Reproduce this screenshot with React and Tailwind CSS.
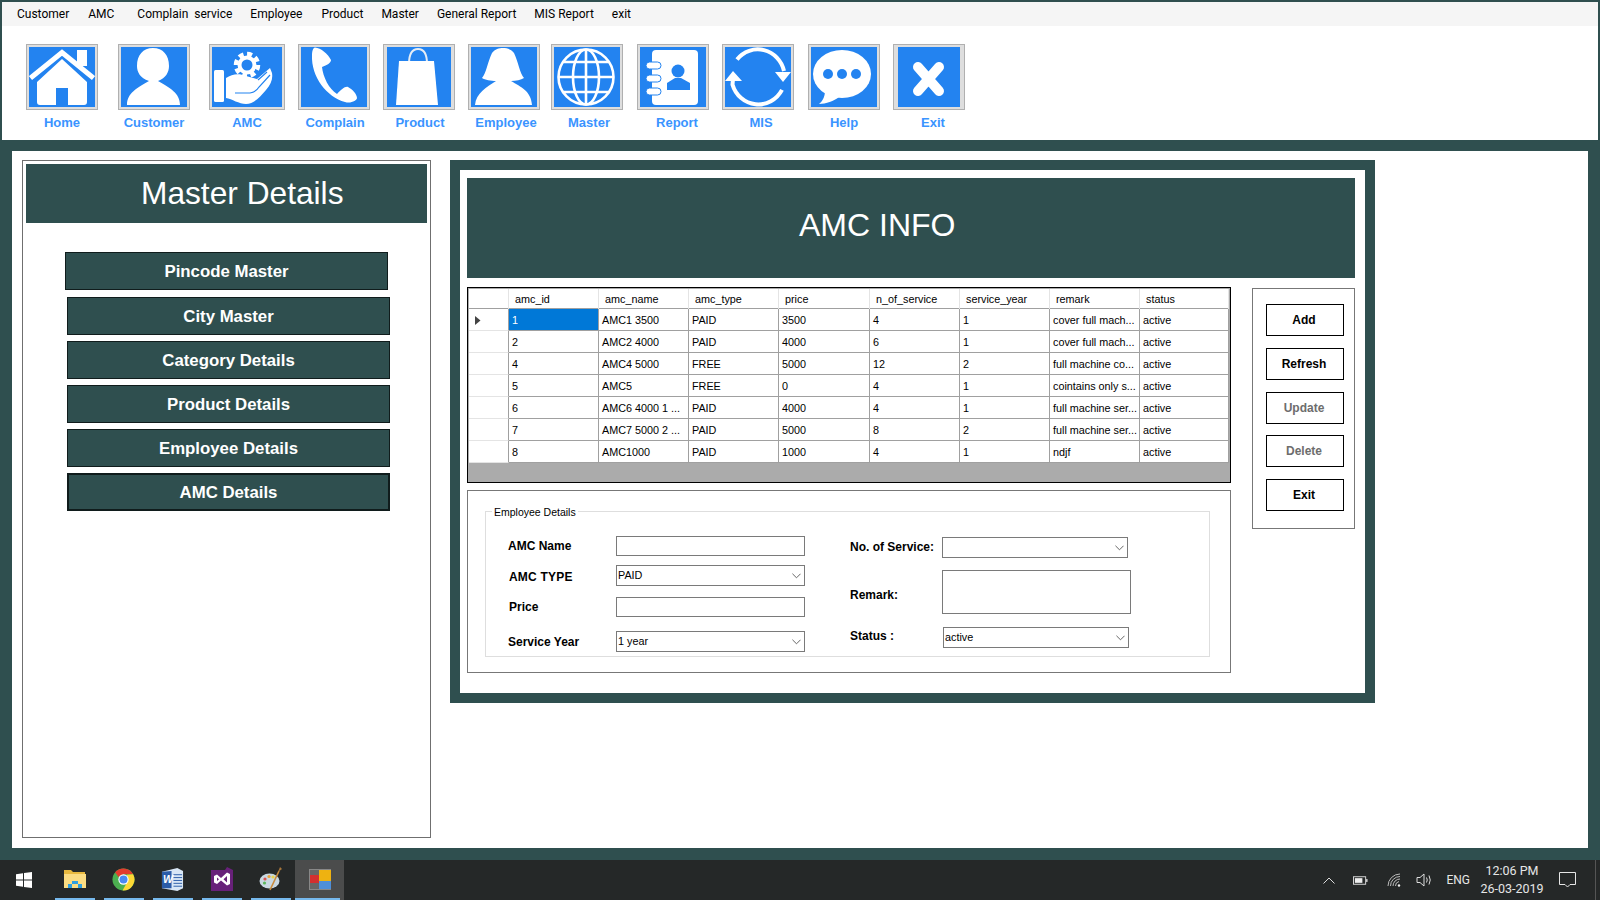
import React from 'react';

const menuItems = [
  { label: 'Customer', cls: '' },
  { label: 'AMC', cls: '' },
  { label: 'Complain  service', cls: 'ml-[4px]' },
  { label: 'Employee', cls: '-ml-[1px]' },
  { label: 'Product', cls: '' },
  { label: 'Master', cls: '-ml-[1px]' },
  { label: 'General Report', cls: '-ml-[1px]' },
  { label: 'MIS Report', cls: '-ml-[1px]' },
  { label: 'exit', cls: '-ml-[1px]' },
];

const HomeIcon = () => (
  <svg viewBox="0 0 66 60" className="block w-full h-full">
    <rect x="48" y="3" width="10" height="16" fill="#fff" />
    <path d="M1.5 31 L33 5.5 L64.5 31" fill="none" stroke="#fff" strokeWidth="5" />
    <path d="M8 35 L33 12 L58 35 V55 Q58 58 55 58 H39 V41 H27 V58 H11 Q8 58 8 55 Z" fill="#fff" />
  </svg>
);

const CustomerIcon = () => (
  <svg viewBox="0 0 66 60" className="block w-full h-full">
    <path d="M6 58 C6 46 16 41 28 34 C19 31 16 25 16 19 C16 8 22 1 32 1 C42 1 48 8 48 19 C48 25 45 31 37 34 C49 41 59 46 59 58 Z" fill="#fff" />
  </svg>
);

const AmcIcon = () => (
  <svg viewBox="0 0 70 60" className="block w-full h-full">
    <circle cx="35" cy="18" r="11" fill="none" stroke="#fff" strokeWidth="4.5" strokeDasharray="5 3.6" />
    <circle cx="35" cy="18" r="7.5" fill="none" stroke="#fff" strokeWidth="4" />
    <rect x="2" y="23" width="10" height="32" rx="1.5" fill="#fff" />
    <path d="M14 31 C20 27 27 26 34 29 L45 32 L58 21 L60 26 C61 32 59 37 54 43 C48 50 42 57 34 57 C27 57 20 52 14 51 Z" fill="#fff" />
    <path d="M23 46 L38 46 Q44 45 47 40 L58 28 M46 33 L55 25" fill="none" stroke="#2383f0" strokeWidth="1.2" />
  </svg>
);

const PhoneIcon = () => (
  <svg viewBox="0 0 66 60" className="block w-full h-full">
    <path d="M14 0.5 C20 1 27 7 30 13 C30 16 26 18 21 20 C22 30 28 42 36 47 C40 43 44 39 47 40 C51 42 56 47 56 51 C56 53 50 57 44 55 C26 50 10 30 11 8 C11 4 12 1 14 0.5 Z" fill="#fff" />
  </svg>
);

const BagIcon = () => (
  <svg viewBox="0 0 64 60" className="block w-full h-full">
    <path d="M22 17 C22 6 26 2 31 2 C36 2 40 6 40 17" fill="none" stroke="#e6edf5" strokeWidth="2" />
    <path d="M12 14 H47 L51 58 H9 Z" fill="#fff" />
  </svg>
);

const EmployeeIcon = () => (
  <svg viewBox="0 0 66 60" className="block w-full h-full">
    <path d="M11 31 C15 27 17 14 21 6 C24 2 28 1 32 1 C36 1 40 2 43 6 C47 14 49 27 53 31 C50 33 45 34 40 34 C50 40 60 44 61 58 H4 C5 46 16 40 25 34 C20 34 14 33 11 31 Z" fill="#fff" />
  </svg>
);

const GlobeIcon = () => (
  <svg viewBox="0 0 66 60" className="block w-full h-full" fill="none" stroke="#fff" strokeWidth="2.6">
    <circle cx="32" cy="30" r="27.5" />
    <ellipse cx="32" cy="30" rx="13" ry="27.5" />
    <path d="M32 2 V58 M4 30 H60 M9 15 H55 M9 45 H55" />
  </svg>
);

const ReportIcon = () => (
  <svg viewBox="0 0 66 60" className="block w-full h-full">
    <rect x="12" y="3" width="46" height="55" rx="4" fill="#fff" />
    <rect x="6" y="15" width="15" height="7" rx="3.5" fill="#fff" stroke="#2383f0" strokeWidth="1" />
    <rect x="6" y="28" width="15" height="7" rx="3.5" fill="#fff" stroke="#2383f0" strokeWidth="1" />
    <rect x="6" y="41" width="15" height="7" rx="3.5" fill="#fff" stroke="#2383f0" strokeWidth="1" />
    <circle cx="38" cy="24" r="6.5" fill="#2383f0" />
    <path d="M27 43 V36 L35 31 H41 L50 36 V43 Z" fill="#2383f0" />
  </svg>
);

const SyncIcon = () => (
  <svg viewBox="0 0 66 60" className="block w-full h-full">
    <path d="M12 12.4 A27 28 0 0 1 59 24 M57 42.9 A27 28 0 0 1 7.5 37.6 L8 32" fill="none" stroke="#fff" strokeWidth="4" />
    <path d="M50 25 H66 L58 35 Z M0 34 H17 L8 24 Z" fill="#fff" />
  </svg>
);

const HelpIcon = () => (
  <svg viewBox="0 0 66 60" className="block w-full h-full">
    <ellipse cx="31" cy="27" rx="29" ry="24" fill="#fff" />
    <path d="M14 44 C14 50 11 55 8 57 C15 57 23 54 28 50 Z" fill="#fff" />
    <circle cx="17" cy="27" r="5" fill="#2383f0" />
    <circle cx="31" cy="27" r="5" fill="#2383f0" />
    <circle cx="45" cy="27" r="5" fill="#2383f0" />
  </svg>
);

const ExitIcon = () => (
  <svg viewBox="0 0 62 60" className="block w-full h-full">
    <path d="M20 20 L41 44 M41 20 L20 44" fill="none" stroke="#fff" strokeWidth="10" strokeLinecap="round" />
  </svg>
);

const toolItems = [
  { label: 'Home', icon: HomeIcon, item: 'ml-[24px]', box: 'w-[72px] px-[2px]', text: '' },
  { label: 'Customer', icon: CustomerIcon, item: 'ml-[20px]', box: 'w-[72px] px-[2px]', text: '' },
  { label: 'AMC', icon: AmcIcon, item: 'ml-[19px]', box: 'w-[76px] px-[2px]', text: '' },
  { label: 'Complain', icon: PhoneIcon, item: 'ml-[13px]', box: 'w-[72px] px-[2px]', text: 'translate-x-[1px]' },
  { label: 'Product', icon: BagIcon, item: 'ml-[13px]', box: 'w-[72px] px-[3px]', text: 'translate-x-[1px]' },
  { label: 'Employee', icon: EmployeeIcon, item: 'ml-[13px]', box: 'w-[72px] px-[2px]', text: 'translate-x-[2px]' },
  { label: 'Master', icon: GlobeIcon, item: 'ml-[11px]', box: 'w-[72px] px-[2px]', text: 'translate-x-[2px]' },
  { label: 'Report', icon: ReportIcon, item: 'ml-[14px]', box: 'w-[72px] px-[2px]', text: 'translate-x-[4px]' },
  { label: 'MIS', icon: SyncIcon, item: 'ml-[13px]', box: 'w-[72px] px-[2px]', text: 'translate-x-[3px]' },
  { label: 'Help', icon: HelpIcon, item: 'ml-[14px]', box: 'w-[72px] px-[2px]', text: '' },
  { label: 'Exit', icon: ExitIcon, item: 'ml-[13px]', box: 'w-[72px] px-[4px]', text: 'translate-x-[4px]' },
];

const masterButtons = [
  { label: 'Pincode Master', cls: 'mt-[29px] ml-[39px] border' },
  { label: 'City Master', cls: 'mt-[7px] ml-[41px] border' },
  { label: 'Category Details', cls: 'mt-[6px] ml-[41px] border' },
  { label: 'Product Details', cls: 'mt-[6px] ml-[41px] border' },
  { label: 'Employee Details', cls: 'mt-[6px] ml-[41px] border' },
  { label: 'AMC Details', cls: 'mt-[6px] ml-[41px] border-2' },
];

const gridCols = ['amc_id', 'amc_name', 'amc_type', 'price', 'n_of_service', 'service_year', 'remark', 'status'];

const gridRows = [
  ['1', 'AMC1 3500', 'PAID', '3500', '4', '1', 'cover full mach...', 'active'],
  ['2', 'AMC2 4000', 'PAID', '4000', '6', '1', 'cover full mach...', 'active'],
  ['4', 'AMC4 5000', 'FREE', '5000', '12', '2', 'full machine co...', 'active'],
  ['5', 'AMC5', 'FREE', '0', '4', '1', 'cointains only s...', 'active'],
  ['6', 'AMC6 4000 1 ...', 'PAID', '4000', '4', '1', 'full machine ser...', 'active'],
  ['7', 'AMC7 5000 2 ...', 'PAID', '5000', '8', '2', 'full machine ser...', 'active'],
  ['8', 'AMC1000', 'PAID', '1000', '4', '1', 'ndjf', 'active'],
];

const sideButtons = [
  { label: 'Add', cls: 'mt-[15px] text-black' },
  { label: 'Refresh', cls: 'mt-[12px] text-black' },
  { label: 'Update', cls: 'mt-[12px] text-[#6d6d6d]' },
  { label: 'Delete', cls: 'mt-[11px] text-[#6d6d6d]' },
  { label: 'Exit', cls: 'mt-[12px] text-black' },
];

const Combo = ({ value, cls }) => (
  <div className={`flex items-start justify-between border border-[#7a7a7a] bg-white pl-[1px] pr-[3px] pt-[1px] text-[10.8px] text-black ${cls}`}>
    <span>{value}</span>
    <svg viewBox="0 0 10 6" className="mt-[6px] w-[9px] h-[6px]">
      <path d="M0.5 0.5 L5 5 L9.5 0.5" fill="none" stroke="#555" strokeWidth="1" />
    </svg>
  </div>
);

const TextBox = ({ cls }) => <div className={`border border-[#7a7a7a] bg-white ${cls}`}></div>;

const Label = ({ children, cls }) => <div className={`text-[12px] font-bold text-black whitespace-pre ${cls}`}>{children}</div>;

const TaskItem = ({ children, active }) => (
  <div className={`relative w-[49px] h-[40px] flex items-center justify-center ${active ? 'bg-[#4b4c4c]' : ''}`}>
    {children}
    <div className={`absolute bottom-0 h-[2px] bg-[#76b9ed] ${active ? 'left-0 w-[45px]' : 'left-[5px] w-[40px]'}`}></div>
  </div>
);

const App = () => {
  return (
    <div className="w-[1600px] h-[900px] overflow-hidden flex flex-col bg-[#2f4f4f] font-['Liberation_Sans',sans-serif]">
      <div className="mx-[2px] mt-[2px] bg-white">
        {/* Menu */}
        <div className="h-[24px] bg-[#f5f5f5] flex items-center gap-[19px] pl-[15px] text-[12px] text-black font-['Roboto',sans-serif]">
          {menuItems.map((m) => (
            <span key={m.label} className={`whitespace-pre ${m.cls}`}>{m.label}</span>
          ))}
        </div>

        {/* Toolbar */}
        <div className="h-[114px] flex items-start pt-[18px]">
          {toolItems.map((t) => {
            const Icon = t.icon;
            return (
              <div key={t.label} className={`flex flex-col items-center ${t.item}`}>
                <div className={`h-[66px] border border-[#b0b0b0] bg-[#dedede] py-[2px] ${t.box}`}>
                  <div className="w-full h-full bg-[#2383f0]">
                    <Icon />
                  </div>
                </div>
                <div className={`text-[13px] font-bold text-[#3a94ff] leading-[15px] mt-[5px] ${t.text}`}>{t.label}</div>
              </div>
            );
          })}
        </div>
      </div>

      {/* Main area */}
      <div className="mt-[11px] ml-[12px] w-[1576px] h-[697px] bg-white flex items-start">
        {/* Master Details */}
        <div className="mt-[9px] ml-[10px] w-[409px] h-[678px] border border-[#6f6f6f] p-[3px]">
          <div className="h-[59px] bg-[#2f4f4f] flex items-center pl-[115px] text-[31.7px] text-white">Master Details</div>
          {masterButtons.map((b) => (
            <div key={b.label} className={`w-[323px] h-[38px] bg-[#2f4f4f] border-[#101c1c] flex items-center justify-center pt-[1px] text-[16.8px] font-bold text-white ${b.cls}`}>
              {b.label}
            </div>
          ))}
        </div>

        {/* AMC Info */}
        <div className="mt-[9px] ml-[19px] w-[925px] h-[543px] bg-[#2f4f4f] p-[10px]">
          <div className="h-[523px] bg-white pt-[8px] pl-[7px]">
            <div className="w-[888px] h-[100px] bg-[#2f4f4f] flex items-center pl-[332px] pb-[6px] text-[32px] text-white">AMC INFO</div>

            <div className="mt-[9px] flex items-start">
              <div className="w-[764px]">
                {/* Data grid */}
                <div className="h-[196px] border border-black bg-[#ababab] p-[1px] text-[10.8px] text-black">
                  <div className="grid grid-cols-[40px_90px_90px_90px_91px_90px_90px_90px_89px] h-[20px] bg-white border-b border-[#a0a0a0]">
                    <div className="border-r border-[#e4e4e4]"></div>
                    {gridCols.map((c) => (
                      <div key={c} className="pl-[6px] leading-[21px] border-r border-[#e4e4e4]">{c}</div>
                    ))}
                  </div>
                  {gridRows.map((row, i) => (
                    <div key={row[0]} className="grid grid-cols-[40px_90px_90px_90px_91px_90px_90px_90px_89px] h-[22px] bg-white">
                      <div className="border-r border-b border-r-[#a0a0a0] border-b-[#e4e4e4] flex items-center pl-[6px] pt-[1px]">
                        {i === 0 && (
                          <svg viewBox="0 0 6 9" className="w-[6px] h-[9px]">
                            <path d="M0 0 L5.5 4.5 L0 9 Z" fill="#444" />
                          </svg>
                        )}
                      </div>
                      {row.map((cell, j) => (
                        <div
                          key={j}
                          className={`border-r border-b border-[#a0a0a0] pl-[3px] leading-[22px] whitespace-nowrap overflow-hidden ${i === 0 && j === 0 ? 'bg-[#0078d7] text-white' : ''}`}
                        >
                          {cell}
                        </div>
                      ))}
                    </div>
                  ))}
                </div>

                {/* Form */}
                <div className="mt-[7px] h-[183px] border border-[#777] pt-[20px] pl-[17px]">
                  <div className="relative w-[725px] h-[146px] border border-[#dedede] flex items-start">
                    <div className="absolute left-[6px] -top-[6px] bg-white px-[2px] text-[10.5px] leading-[13px] text-black">Employee Details</div>

                    <div className="ml-[22px] w-[297px]">
                      <div className="mt-[24px] flex items-center">
                        <Label cls="w-[108px]">AMC Name</Label>
                        <TextBox cls="w-[189px] h-[20px]" />
                      </div>
                      <div className="mt-[9px] flex items-center">
                        <Label cls="w-[108px] pl-[1px] pt-[2px] tracking-[0.2px]">AMC TYPE</Label>
                        <Combo value="PAID" cls="w-[189px] h-[21px]" />
                      </div>
                      <div className="mt-[11px] flex items-center">
                        <Label cls="w-[108px] pl-[1px]">Price</Label>
                        <TextBox cls="w-[189px] h-[20px]" />
                      </div>
                      <div className="mt-[14px] flex items-center">
                        <Label cls="w-[108px] pt-[1px]">Service Year</Label>
                        <Combo value="1 year" cls="w-[189px] h-[21px]" />
                      </div>
                    </div>

                    <div className="ml-[46px]">
                      <div className="mt-[25px] flex items-center">
                        <Label cls="w-[91px] -ml-[1px] mr-[1px] pb-[2px]">No. of Service:</Label>
                        <Combo value="" cls="w-[186px] h-[21px]" />
                      </div>
                      <div className="mt-[12px] flex items-center">
                        <Label cls="w-[91px] -ml-[1px] mr-[1px] pt-[6px]">Remark:</Label>
                        <TextBox cls="w-[189px] h-[44px]" />
                      </div>
                      <div className="mt-[13px] -ml-[1px] flex items-center">
                        <Label cls="w-[93px] pb-[3px]">Status :</Label>
                        <Combo value="active" cls="w-[186px] h-[21px]" />
                      </div>
                    </div>
                  </div>
                </div>
              </div>

              {/* Side buttons */}
              <div className="ml-[21px] mt-[1px] w-[103px] h-[241px] border border-[#777] pl-[13px]">
                {sideButtons.map((b) => (
                  <div key={b.label} className={`w-[78px] h-[32px] border border-black flex items-center justify-center pr-[2px] text-[12px] font-bold ${b.cls}`}>
                    {b.label}
                  </div>
                ))}
              </div>
            </div>
          </div>
        </div>
      </div>

      {/* Taskbar */}
      <div className="mt-[12px] h-[40px] bg-[#252828] flex items-center">
        <div className="w-[50px] flex justify-center pr-[2px]">
          <svg viewBox="0 0 16 16" className="w-[16px] h-[16px]">
            <path d="M0 2.3 L7 1.3 V7.6 H0 Z M8 1.1 L16 0 V7.6 H8 Z M0 8.5 H7 V14.7 L0 13.7 Z M8 8.5 H16 V16 L8 14.9 Z" fill="#fff" />
          </svg>
        </div>
        <TaskItem>
          <svg viewBox="0 0 22 20" className="w-[22px] h-[20px] mb-[2px]">
            <path d="M0 1 H7 L9 3 H21 V6 H0 Z" fill="#e8b93f" />
            <rect x="0" y="5" width="22" height="14" fill="#fbdc82" />
            <path d="M4 19 V15 H8 V12 H14 V15 H18 V19 Z" fill="#2f9fe0" />
            <rect x="8" y="15" width="6" height="4" fill="#fbdc82" />
          </svg>
        </TaskItem>
        <TaskItem>
          <svg viewBox="0 0 24 24" className="w-[23px] h-[23px] mb-[2px]">
            <circle cx="12" cy="12" r="11.5" fill="#4caf50" />
            <path d="M12 .5 A11.5 11.5 0 0 1 22 6.5 L12 6.5 L6.8 9.5 L3.2 4.5 A11.5 11.5 0 0 1 12 .5 Z" fill="#e33b2e" />
            <path d="M22 6.5 A11.5 11.5 0 0 1 11 23.5 L16.8 13 L15.5 7 Z" fill="#fdd835" />
            <circle cx="12" cy="12" r="5.4" fill="#fff" />
            <circle cx="12" cy="12" r="4.2" fill="#4a89f3" />
          </svg>
        </TaskItem>
        <TaskItem>
          <svg viewBox="0 0 24 24" className="w-[23px] h-[23px] mb-[2px]">
            <path d="M1 4 L17 0 L23 3 V21 L17 24 L1 21 Z" fill="#d8e6f6" />
            <path d="M1 4 L11 3 V21 L1 21 Z" fill="#2b5ca8" />
            <path d="M13 7 H22 M13 10 H22 M13 13 H22 M13 16 H22 M13 19 H22" stroke="#2b5ca8" strokeWidth="1" />
            <text x="2" y="16" fontSize="11" fontWeight="700" fontStyle="italic" fill="#fff">W</text>
          </svg>
        </TaskItem>
        <TaskItem>
          <svg viewBox="0 0 22 24" className="w-[22px] h-[24px] mb-[2px]">
            <path d="M0 3 H14 L16 0 L22 3 V24 H0 Z" fill="#68217a" />
            <path d="M3 9 L6 7.5 L10 11 L16 5.5 L19 7 V17 L16 18.5 L10 13.5 L6 17 L3 15.5 Z M6 10.5 V14 L8 12.3 Z M16 9 L12.5 12.3 L16 15.5 Z" fill="#fff" fillRule="evenodd" />
          </svg>
        </TaskItem>
        <TaskItem>
          <svg viewBox="0 0 24 24" className="w-[24px] h-[24px] mb-[2px]">
            <ellipse cx="10.5" cy="14" rx="10" ry="7.5" fill="#c9d8e2" />
            <circle cx="6" cy="12" r="1.6" fill="#d9534f" />
            <circle cx="10" cy="9.5" r="1.6" fill="#e9a23b" />
            <circle cx="14" cy="10" r="1.6" fill="#e8d44d" />
            <circle cx="5.5" cy="16" r="1.6" fill="#5cb85c" />
            <path d="M11 23 L20 4" stroke="#c98a3c" strokeWidth="1.6" />
            <path d="M19 5 L21 0 L23 2 Z" fill="#a8763a" />
          </svg>
        </TaskItem>
        <TaskItem active>
          <div className="mb-[2px] grid grid-cols-[9px_12px] w-[22px] h-[21px] border border-[#888] bg-[#666]">
            <div className="flex flex-col justify-center">
              <div className="h-[8px] bg-[#d32f2f]"></div>
            </div>
            <div className="flex flex-col">
              <div className="h-[11px] bg-[#eeb211]"></div>
              <div className="h-[8px] bg-[#4f8fd9]"></div>
            </div>
          </div>
        </TaskItem>

        <div className="ml-auto flex items-center text-[12px] text-[#e6e6e6] font-['Roboto',sans-serif]">
          <svg viewBox="0 0 12 7" className="w-[12px] h-[7px]">
            <path d="M0.5 6.5 L6 1 L11.5 6.5" fill="none" stroke="#ddd" strokeWidth="1" />
          </svg>
          <svg viewBox="0 0 16 9" className="ml-[18px] w-[15px] h-[9px]">
            <rect x="0.5" y="0.5" width="13" height="8" fill="none" stroke="#ddd" />
            <rect x="2" y="2" width="8" height="5" fill="#eee" />
            <rect x="14" y="3" width="1.5" height="3" fill="#ddd" />
          </svg>
          <svg viewBox="0 0 14 14" className="ml-[19px] w-[14px] h-[14px]">
            <path d="M1 13 A12 12 0 0 1 13 1 M3.5 13 A9.5 9.5 0 0 1 13 3.5 M6 13 A7 7 0 0 1 13 6 M8.5 13 A4.5 4.5 0 0 1 12 8.5" fill="none" stroke="#bbb" strokeWidth="1" />
            <circle cx="12" cy="12.5" r="1.2" fill="#eee" />
          </svg>
          <svg viewBox="0 0 17 14" className="ml-[15px] w-[17px] h-[14px]">
            <path d="M1 4.5 H4 L8 1 V13 L4 9.5 H1 Z" fill="none" stroke="#ddd" />
            <path d="M10.5 4.5 Q12 7 10.5 9.5 M13 2.5 Q15.5 7 13 11.5" fill="none" stroke="#ddd" />
          </svg>
          <span className="ml-[13px]">ENG</span>
          <div className="ml-[7px] w-[70px] text-center leading-[18px] text-[12.5px]">
            <div>12:06 PM</div>
            <div>26-03-2019</div>
          </div>
          <svg viewBox="0 0 17 16" className="ml-[12px] w-[17px] h-[16px]">
            <path d="M0.5 0.5 H16.5 V12.5 H11 L8.5 15 L6 12.5 H0.5 Z" fill="none" stroke="#e6e6e6" />
          </svg>
          <div className="ml-[19px] mr-[4px] w-px h-[40px] bg-[#555]"></div>
        </div>
      </div>
    </div>
  );
};

export default App;
